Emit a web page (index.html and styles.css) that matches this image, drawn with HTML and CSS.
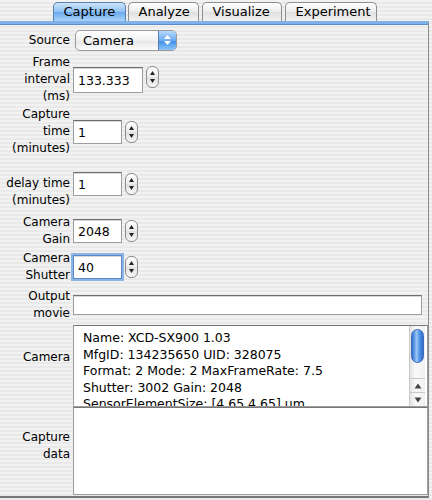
FILE: index.html
```html
<!DOCTYPE html>
<html>
<head>
<meta charset="utf-8">
<link rel="stylesheet" href="styles.css">
</head>
<body>
<div class="window">
  <div class="tabs">
    <div class="tab active">Capture</div>
    <div class="tab">Analyze</div>
    <div class="tab">Visualize</div>
    <div class="tab">Experiment</div>
  </div>
  <div class="pane">
    <div class="row r-source">
      <div class="label">Source</div>
      <div class="popup"><span>Camera</span><span class="popup-arrows"><svg width="9" height="12" viewBox="0 0 9 12"><path d="M4.5 1 L8 5 H1 Z M4.5 11 L8 7 H1 Z" fill="#fff"/></svg></span></div>
    </div>
    <div class="row r-frame">
      <div class="label">Frame<br>interval<br>(ms)</div>
      <div class="field w70">133.333</div>
      <div class="stepper up2"><svg width="13" height="22" viewBox="0 0 13 22"><path d="M6.5 5 L9 9 H4 Z M6.5 17 L9 13 H4 Z" fill="#222"/></svg></div>
    </div>
    <div class="row r-capture">
      <div class="label">Capture<br>time<br>(minutes)</div>
      <div class="field w49">1</div>
      <div class="stepper"><svg width="13" height="22" viewBox="0 0 13 22"><path d="M6.5 5 L9 9 H4 Z M6.5 17 L9 13 H4 Z" fill="#222"/></svg></div>
    </div>
    <div class="row r-delay">
      <div class="label"><br>delay time<br>(minutes)</div>
      <div class="field w49">1</div>
      <div class="stepper"><svg width="13" height="22" viewBox="0 0 13 22"><path d="M6.5 5 L9 9 H4 Z M6.5 17 L9 13 H4 Z" fill="#222"/></svg></div>
    </div>
    <div class="row r-gain">
      <div class="label">Camera<br>Gain</div>
      <div class="field w49">2048</div>
      <div class="stepper"><svg width="13" height="22" viewBox="0 0 13 22"><path d="M6.5 5 L9 9 H4 Z M6.5 17 L9 13 H4 Z" fill="#222"/></svg></div>
    </div>
    <div class="row r-shutter">
      <div class="label">Camera<br>Shutter</div>
      <div class="field w49 focused">40</div>
      <div class="stepper"><svg width="13" height="22" viewBox="0 0 13 22"><path d="M6.5 5 L9 9 H4 Z M6.5 17 L9 13 H4 Z" fill="#222"/></svg></div>
    </div>
    <div class="row r-output">
      <div class="label">Output<br>movie</div>
      <div class="field wide"></div>
    </div>
    <div class="row r-camera">
      <div class="label lift10">Camera</div>
      <div class="textarea cam">
        <div class="text">Name: XCD-SX900 1.03<br>MfgID: 134235650 UID: 328075<br>Format: 2 Mode: 2 MaxFrameRate: 7.5<br>Shutter: 3002 Gain: 2048<br>SensorElementSize: [4.65 4.65] um</div>
        <div class="scrollbar">
          <div class="thumb"></div>
          <div class="arrows">
            <div class="arr"><svg width="8" height="6" viewBox="0 0 8 6"><path d="M4 0.5 L7.5 5.5 H0.5 Z" fill="#444"/></svg></div>
            <div class="arr"><svg width="8" height="6" viewBox="0 0 8 6"><path d="M4 5.5 L7.5 0.5 H0.5 Z" fill="#444"/></svg></div>
          </div>
        </div>
      </div>
    </div>
    <div class="row r-data">
      <div class="label lift6">Capture<br>data</div>
      <div class="textarea data"></div>
    </div>
  </div>
</div>
</body>
</html>
```
FILE: styles.css
```css
html, body {
  margin: 0;
  padding: 0;
}
body {
  width: 432px;
  height: 500px;
  overflow: hidden;
  font-family: "DejaVu Sans", "Lucida Grande", sans-serif;
  font-size: 12px;
  color: #000;
  background: repeating-linear-gradient(to bottom, #f2f2f2 0 2px, #e9e9e9 2px 4px);
}
.window {
  width: 429px;
  padding-top: 2px;
}
.tabs {
  display: flex;
  justify-content: center;
  gap: 2px;
  height: 19px;
  position: relative;
  z-index: 1;
}
.tab {
  height: 18px;
  line-height: 18px;
  padding: 0 10px;
  border: 1px solid #8e8e8e;
  border-bottom: none;
  border-radius: 5px 5px 0 0;
  background: linear-gradient(#ffffff, #ececec 50%, #e0e0e0 51%, #f2f2f2);
  font-size: 13px;
}
.tab.active {
  background: linear-gradient(#cde4fb, #8fc1f1 50%, #6aaaed 51%, #a9d3fb);
  border-color: #5a7fb0;
}
.tabs .tab:nth-child(1) { width: 51px; }
.tabs .tab:nth-child(2) { width: 49px; }
.tabs .tab:nth-child(3) { width: 58px; margin-left: 1px; }
.tabs .tab:nth-child(4) { width: 70px; margin-left: 1px; }
.pane {
  height: 472px;
  border-top: 3px solid #7fb0ea;
  box-shadow: inset 0 1px 0 #5d8ccb;
  border-right: 1px solid #8a8a8a;
  border-bottom: 2px solid #777;
  display: flex;
  flex-direction: column;
}
.row {
  display: flex;
  align-items: center;
}
.label {
  width: 70px;
  text-align: right;
  line-height: 17px;
  margin-right: 3px;
  flex: none;
}
.lift10 { margin-bottom: 18px; }
.lift6 { margin-bottom: 10px; }
.r-source { height: 22px; margin-top: 5px; }
.r-frame { height: 51px; margin-top: 3px; }
.r-capture { height: 51px; margin-top: 1px; }
.r-delay { height: 51px; margin-top: 1px; }
.r-gain { height: 34px; margin-top: 5px; }
.r-shutter { height: 34px; margin-top: 2px; }
.r-output { height: 34px; margin-top: 4px; }
.r-camera { height: 82px; margin-top: 3px; }
.r-data { height: 88px; margin-top: 0; }
.popup {
  width: 100px;
  height: 19px;
  border: 1px solid #9a9a9a;
  border-radius: 5px;
  background: linear-gradient(#ffffff, #f1f1f1 50%, #e6e6e6 51%, #fbfbfb);
  display: flex;
  align-items: center;
  justify-content: space-between;
  font-size: 13px;
  overflow: hidden;
  margin-left: 2px;
}
.popup span:first-child { padding-left: 7px; }
.popup-arrows {
  width: 17px;
  height: 19px;
  background: linear-gradient(#b7d9fb, #6aaaed 50%, #3d8de6 51%, #8ec5fb);
  border-left: 1px solid #5a7fb0;
  display: flex;
  align-items: center;
  justify-content: center;
}
.field {
  height: 24px;
  box-sizing: border-box;
  background: #fff;
  border: 1px solid #9d9d9d;
  border-top-color: #6e6e6e;
  box-shadow: inset 0 1px 0 #d8d8d8;
  padding: 0 4px;
  line-height: 23px;
  font-size: 12.5px;
  flex: none;
}
.w70 { width: 70px; height: 26px; line-height: 25px; }
.w49 { width: 49px; }
.wide { width: 349px; height: 20px; }
.focused {
  border-color: #5a87c8;
  box-shadow: 0 0 0 2px #8db4e6, inset 0 1px 0 #d8d8d8;
}
.stepper {
  width: 13px;
  height: 22px;
  margin-left: 3px;
  border: 1px solid #8c8c8c;
  border-radius: 6px;
  box-sizing: border-box;
  background: linear-gradient(#ffffff, #ececec 50%, #e0e0e0 51%, #f7f7f7);
  display: flex;
  align-items: center;
  justify-content: center;
  overflow: hidden;
}
.stepper svg { flex: none; }
.up2 { margin-bottom: 6px; }
.textarea {
  width: 355px;
  box-sizing: border-box;
  height: 100%;
  background: #fff;
  border: 1px solid #9d9d9d;
  border-top-color: #777;
  display: flex;
}
.text {
  flex: 1;
  padding: 4px 0 0 9px;
  line-height: 16.6px;
  font-size: 12.5px;
  height: 80px;
  box-sizing: border-box;
  overflow: hidden;
  white-space: nowrap;
}
.scrollbar {
  width: 15px;
  border-left: 1px solid #c8c8c8;
  background: linear-gradient(to right, #e4e4e4, #fafafa 40%, #f0f0f0);
  display: flex;
  flex-direction: column;
  justify-content: space-between;
  margin-right: 2px;
}
.thumb {
  margin: 3px 1px 0 1px;
  height: 32px;
  border-radius: 7px;
  border: 1px solid #3c6fb6;
  background: linear-gradient(to right, #2f6fd0, #9fcaf7 45%, #5f9fec 60%, #2d6bcf);
}
.arrows { display: flex; flex-direction: column; }
.arr {
  height: 13px;
  display: flex;
  align-items: center;
  justify-content: center;
  border-top: 1px solid #c8c8c8;
}
.data { width: 355px; }
```
